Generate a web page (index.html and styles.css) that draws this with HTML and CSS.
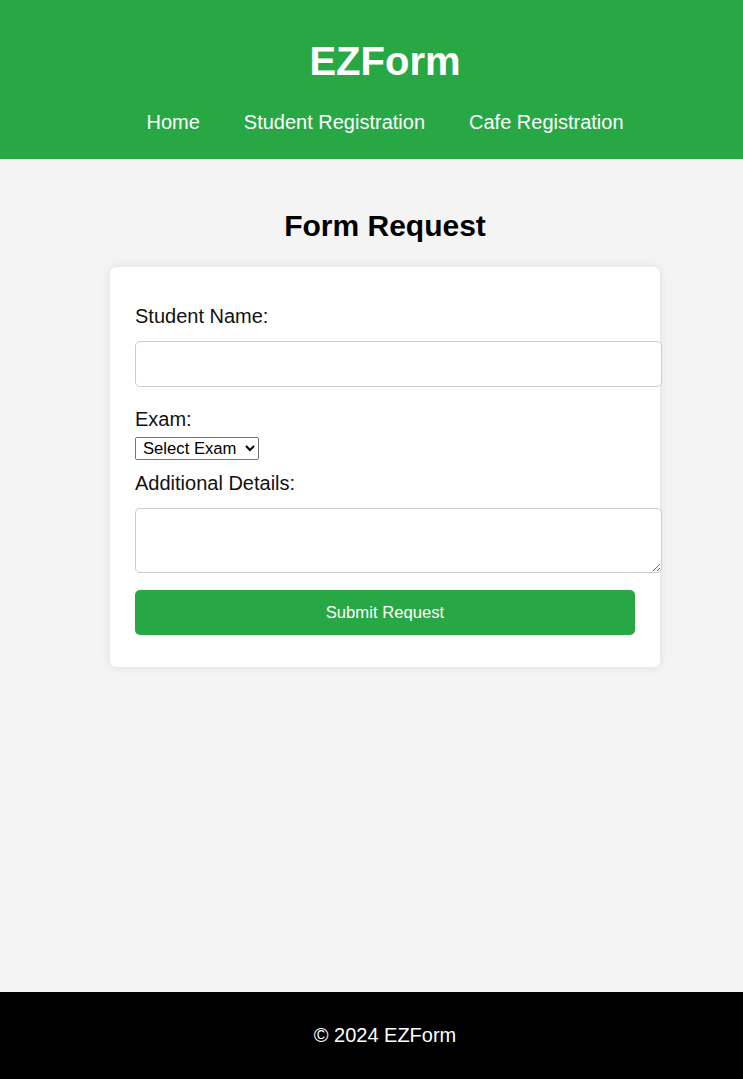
FILE: index.html
```html
<!DOCTYPE html>
<html lang="en">
<head>
<meta charset="utf-8">
<title>EZForm - Form Request</title>
<link rel="stylesheet" href="styles.css">
</head>
<body>
<div class="page">
  <header class="site-header">
    <h1 class="brand">EZForm</h1>
    <nav class="nav">
      <a href="#" class="nav-link">Home</a>
      <a href="#" class="nav-link">Student Registration</a>
      <a href="#" class="nav-link">Cafe Registration</a>
    </nav>
  </header>
  <main class="main">
    <h2 class="page-title">Form Request</h2>
    <form class="card">
      <label class="label label-first" for="name">Student Name:</label>
      <input class="field field-input" type="text" id="name">
      <label class="label label-exam" for="exam">Exam:</label>
      <select class="select" id="exam">
        <option>Select Exam</option>
      </select>
      <label class="label label-details" for="details">Additional Details:</label>
      <textarea class="field field-area" id="details"></textarea>
      <button class="submit" type="button">Submit Request</button>
    </form>
  </main>
  <footer class="site-footer">
    <p class="copy">© 2024 EZForm</p>
  </footer>
</div>
</body>
</html>
```
FILE: styles.css
```css
html {
  overflow-x: hidden;
}
body {
  margin: 0;
  font-family: "Liberation Sans", Arial, sans-serif;
  color: #111;
  background: #f4f4f4;
}
.page {
  width: 770px;
  min-height: 100vh;
  display: flex;
  flex-direction: column;
}
.site-header {
  background: #28a745;
  color: #fff;
  padding: 38px 0 25px;
  text-align: center;
}
.brand {
  margin: 0 0 27px;
  font-size: 40px;
  line-height: 46px;
  font-weight: bold;
}
.nav {
  display: flex;
  justify-content: center;
  gap: 44px;
}
.nav-link {
  color: #fff;
  text-decoration: none;
  font-size: 20px;
  line-height: 23px;
}
.main {
  flex: 1;
  padding: 25px 0 0;
  display: flex;
  flex-direction: column;
  align-items: center;
}
.page-title {
  margin: 25px 0 24px;
  font-size: 30px;
  line-height: 34px;
  font-weight: bold;
  color: #000;
}
.card {
  width: 500px;
  background: #fff;
  border-radius: 6px;
  box-shadow: 0 0 10px rgba(0, 0, 0, 0.1);
  padding: 25px;
  display: flex;
  flex-direction: column;
  align-items: flex-start;
}
.label {
  display: block;
  font-size: 20px;
  line-height: 23px;
}
.label-first {
  margin-top: 13px;
}
.label-exam {
  margin-top: 21px;
}
.label-details {
  margin-top: 12px;
}
.field {
  width: 100%;
  padding: 12.5px;
  border: 1px solid #ccc;
  border-radius: 5px;
  font-family: "Liberation Sans", Arial, sans-serif;
  font-size: 16.67px;
  line-height: 19px;
  background: #fff;
  box-sizing: content-box;
}
.field-input {
  height: 19px;
  margin-top: 13px;
}
.field-area {
  height: 38px;
  margin-top: 13px;
  resize: vertical;
}
.select {
  margin-top: 6px;
  height: 23px;
  padding: 0 5px 0 3px;
  font-family: "Liberation Sans", Arial, sans-serif;
  font-size: 16.67px;
  color: #000;
}
.submit {
  width: 100%;
  height: 45px;
  margin: 17px 0 7px;
  border: none;
  border-radius: 5px;
  background: #28a745;
  color: #fff;
  font-family: "Liberation Sans", Arial, sans-serif;
  font-size: 16.67px;
  cursor: pointer;
}
.site-footer {
  background: #000;
  color: #fff;
  text-align: center;
  padding: 32px 0;
}
.copy {
  margin: 0;
  font-size: 20px;
  line-height: 23px;
}
```
